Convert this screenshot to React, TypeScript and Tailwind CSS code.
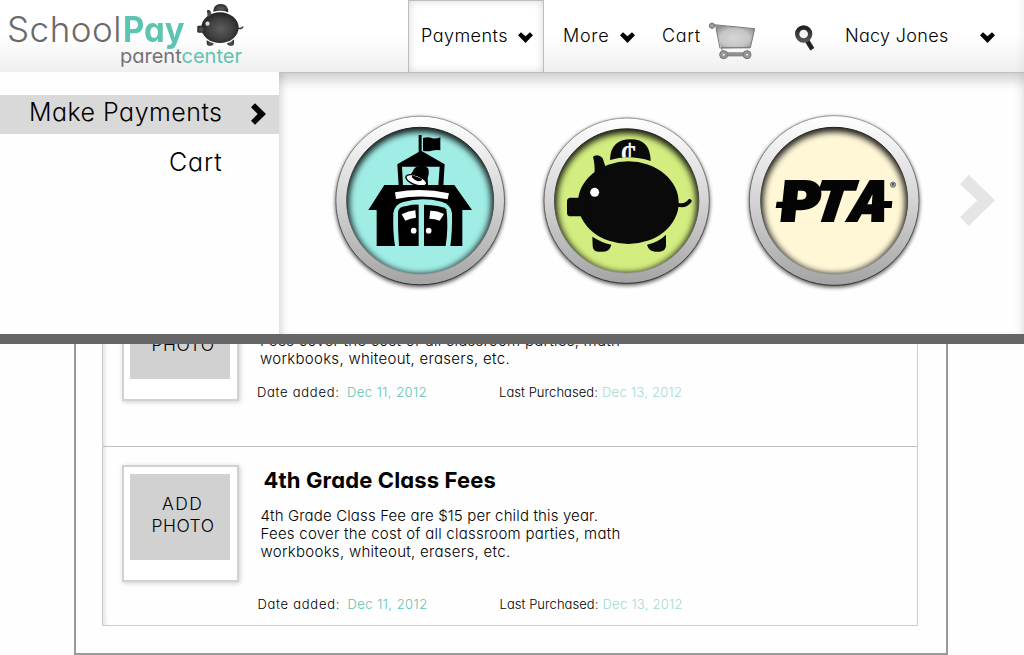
import type { ReactNode } from "react";

function ChevronDown({ className = "" }: { className?: string }) {
  return (
    <svg className={`block h-[11px] w-[15px] shrink-0 ${className}`} viewBox="355 94 45 33">
      <path d="M355 104 364 95 377.500 107 391 95 400 104 377.500 127Z" fill="#000" />
    </svg>
  );
}

function PigShape() {
  return (
    <>
      <path d="M225 165Q226 103 287 103Q346 103 347 168Q312 157 280 157Q250 158 225 165Z" />
      <ellipse cx="280" cy="293" rx="151" ry="124" />
      <path d="M174 155Q190 145 203 160L213 190 178 214Q181 180 174 155Z" />
      <rect x="96" y="278" width="60" height="56" rx="11" />
      <path d="M426 299Q444 304 454 297 462 292 464 288" fill="none" stroke="currentColor" strokeWidth="12" strokeLinecap="round" />
      <path d="M172 395Q198 412 229 419 224 440 205 440H190Q173 438 173 422Z" />
      <path d="M393 389V424Q391 439 375 440H360Q341 438 336 419 370 412 393 389Z" />
    </>
  );
}

function Logo() {
  return (
    <div className="flex w-[408px] shrink-0">
      <div>
        <div className="flex pl-[7px] text-[35px] leading-[58px]">
          <span className="w-[116px] tracking-[0.5px] text-[#6a6a6c]">School</span>
          <span className="origin-left scale-x-[0.94] font-bold text-[#5cc4b0]">Pay</span>
        </div>
        <div className="-mt-[12px] pl-[120px] text-[20px] leading-[20px] font-normal text-[#727274]">
          parent<span className="text-[#5cc4b0]">center</span>
        </div>
      </div>
      <svg className="mt-[3px] -ml-[45px] h-[44px] w-[47px] text-[#333]" viewBox="94 101 380 342">
        <defs>
          <radialGradient id="logoPig" cx="0.52" cy="0.55" r="0.55">
            <stop offset="0" stopColor="#5c5c5c" />
            <stop offset="0.6" stopColor="#404040" />
            <stop offset="1" stopColor="#222" />
          </radialGradient>
        </defs>
        <g fill="url(#logoPig)">
          <PigShape />
        </g>
        <circle cx="179" cy="261" r="17" fill="#ddd" />
      </svg>
    </div>
  );
}

function Badge({ id, cx, cy, r, inner, color, children }: { id: string; cx: number; cy: number; r: number; inner: number; color: string; children: ReactNode }) {
  return (
    <svg className="block h-[190px] w-[190px] shrink-0" viewBox="0 0 570 570">
      <defs>
        <linearGradient id={`${id}Ring`} x1="0" y1="0" x2="0" y2="1">
          <stop offset="0" stopColor="#fff" />
          <stop offset="0.5" stopColor="#d4d4d4" />
          <stop offset="1" stopColor="#a4a4a4" />
        </linearGradient>
        <linearGradient id={`${id}Edge`} x1="0" y1="0" x2="0" y2="1">
          <stop offset="0" stopColor="#999" />
          <stop offset="1" stopColor="#333" />
        </linearGradient>
        <linearGradient id={`${id}Lip`} x1="0" y1="0" x2="0" y2="1">
          <stop offset="0" stopColor="#222" />
          <stop offset="0.6" stopColor="#555" />
          <stop offset="1" stopColor="#999" />
        </linearGradient>
        <filter id={`${id}Blur`} x="-20%" y="-20%" width="140%" height="140%">
          <feGaussianBlur stdDeviation="10" />
        </filter>
        <filter id={`${id}Drop`} x="-20%" y="-20%" width="140%" height="140%">
          <feGaussianBlur stdDeviation="6" />
        </filter>
        <clipPath id={`${id}Clip`}>
          <circle cx={cx} cy={cy} r={inner} />
        </clipPath>
      </defs>
      <circle cx={cx} cy={cy + 4} r={r + 1} fill="#000" opacity="0.7" filter={`url(#${id}Drop)`} />
      <circle cx={cx} cy={cy - 1} r={r} fill={`url(#${id}Ring)`} stroke={`url(#${id}Edge)`} strokeWidth="3" />
      <circle cx={cx} cy={cy} r={inner} fill={color} />
      <g clipPath={`url(#${id}Clip)`}>
        <circle cx={cx} cy={cy + 6} r={inner + 8} fill="none" stroke="#000" strokeOpacity="0.9" strokeWidth="30" filter={`url(#${id}Blur)`} />
      </g>
      <circle cx={cx} cy={cy} r={inner} fill="none" stroke={`url(#${id}Lip)`} strokeWidth="3" />
      {children}
    </svg>
  );
}

function SchoolBadge() {
  return (
    <Badge id="school" cx={285.500} cy={287.500} r={253} inner={220.500} color="#a0ede6">
      <path d="M281 90H290V138L359 178 355 242H340L344 185H231L234 242H221L217 178 281 141Z" />
      <path d="M294 99Q308 95 320 99T346 97V136Q332 134 320 137T294 137Z" />
      <path d="M243 221Q262 206 267 192 274 181 291 183 309 184 311 195 313 206 308 219L309 242H299Z" />
      <ellipse cx="274" cy="226" rx="33" ry="14" transform="rotate(20 274 226)" fill="#fff" stroke="#000" strokeWidth="4" />
      <path d="M262 211 292 221 289 227 279 229 270 225 260 217Z" />
      <path d="M178 240H388L441 315H412V423H155V315H130Z" />
      <path d="M210 262Q290 246 372 265L368 283Q290 267 213 282Z" fill="#fff" />
      <path d="M210 423Q203 380 205 325 206 300 235 291 290 275 350 290 379 299 381 325 382 380 376 423Z" fill="#a0ede6" />
      <path d="M222 423Q218 370 219 320 222 304 245 303 265 298 281 299V423Z" />
      <path d="M297 299Q345 300 364 312 371 365 362 423H297Z" />
      <path d="M230 328Q250 318 271 316L273 338Q257 339 241 347Z" fill="#fff" />
      <path d="M316 317Q338 317 357 327L344 347Q330 341 313 341Z" fill="#fff" />
      <circle cx="266" cy="377" r="8.500" fill="#fff" />
      <circle cx="311" cy="377" r="8.500" fill="#fff" />
    </Badge>
  );
}

function PigBadge() {
  return (
    <Badge id="pig" cx={275} cy={288} r={248} inner={216.500} color="#d3ed80">
      <g className="text-[#0a0a0a]" fill="#0a0a0a">
        <PigShape />
      </g>
      <clipPath id="coinClip">
        <path d="M225 165Q226 103 287 103Q346 103 347 168Q312 157 280 157Q250 158 225 165Z" />
      </clipPath>
      <g clipPath="url(#coinClip)">
        <text x="281" y="179" textAnchor="middle" fontSize="104" fill="#fff" stroke="#fff" strokeWidth="1.500" className="font-['Liberation_Serif',serif] font-normal">
          ¢
        </text>
      </g>
      <circle cx="179" cy="262" r="13.500" fill="#fff" />
    </Badge>
  );
}

function PtaBadge() {
  return (
    <Badge id="pta" cx={282.500} cy={287.500} r={254.500} inner={220.500} color="#fff7d6">
      <g fill="#050505" stroke="#050505" strokeWidth="6" fontWeight="900" fontSize="165" className="font-[Inter,sans-serif]">
        <text transform="translate(116 348) skewX(-6)" textLength="121" lengthAdjust="spacingAndGlyphs">P</text>
        <text transform="translate(205 348) skewX(-18)" textLength="116" lengthAdjust="spacingAndGlyphs">T</text>
        <text transform="translate(315 348) skewX(-17)" textLength="118" lengthAdjust="spacingAndGlyphs">A</text>
      </g>
      <path d="M110 290H135L133 309H107Z" />
      <path d="M420 288H457L455 309H420Z" />
      <circle cx="459" cy="239" r="8" fill="#bbb" stroke="#444" strokeWidth="2" />
      <text x="459" y="244" textAnchor="middle" fontSize="12" fontWeight="700" fill="#333" className="font-[Inter,sans-serif]">R</text>
    </Badge>
  );
}

function CartIcon() {
  return (
    <svg className="ml-[8px] mt-[20px] block h-[42px] w-[49px] shrink-0" viewBox="55 60 147 126">
      <defs>
        <radialGradient id="cartFill" cx="0.5" cy="0.55" r="0.6">
          <stop offset="0" stopColor="#d6d6d6" />
          <stop offset="0.6" stopColor="#c6c6c6" />
          <stop offset="1" stopColor="#8d8d8d" />
        </radialGradient>
      </defs>
      <path d="M74 75 195 87 181 145 94 146 79 84Z" fill="url(#cartFill)" />
      <path d="M72 74 195 86 182 143H94L101 158M91 145 79 84" fill="none" stroke="#777" strokeWidth="3" strokeLinejoin="round" />
      <path d="M101 163H171" stroke="#777" strokeWidth="12" />
      <path d="M103 163H170" stroke="#aaa" strokeWidth="6" />
      <path d="M110 163H162" stroke="#777" strokeWidth="2" />
      <g fill="#999" stroke="#777" strokeWidth="3">
        <circle cx="67" cy="77" r="8" />
        <circle cx="102" cy="164" r="12" />
        <circle cx="172" cy="164" r="12" />
      </g>
      <g fill="#eee" stroke="#777" strokeWidth="2">
        <circle cx="67" cy="77" r="3" />
        <circle cx="102" cy="164" r="4.500" />
        <circle cx="172" cy="164" r="4.500" />
      </g>
    </svg>
  );
}

function SearchIcon() {
  return (
    <svg className="mt-[25px] ml-[37px] block h-[27px] w-[22px] shrink-0" viewBox="312 75 66 81">
      <defs>
        <linearGradient id="lens" x1="0" y1="0" x2="0" y2="1">
          <stop offset="0" stopColor="#222" />
          <stop offset="1" stopColor="#555" />
        </linearGradient>
      </defs>
      <path d="M350 120 367 148" stroke="#222" strokeWidth="14" />
      <circle cx="341" cy="102" r="19.500" fill="#f4f4f4" stroke="url(#lens)" strokeWidth="13" />
    </svg>
  );
}

function Header() {
  return (
    <header className="flex h-[72px] bg-linear-to-b from-white from-50% to-[#efefef] text-[18px] leading-[71px] shadow-[inset_-10px_0_10px_-8px_rgba(0,0,0,0.06)]">
      <Logo />
      <div className="relative z-10 flex h-[73px] w-[136px] shrink-0 items-start border border-[#bdbdbd] bg-white pl-[12px] leading-[69px] shadow-[inset_0_0_8px_rgba(0,0,0,0.16)]">
        <span className="w-[97px] tracking-[0.45px]">Payments</span>
        <ChevronDown className="mt-[31px]" />
      </div>
      <span className="ml-[19px] w-[57px] shrink-0 tracking-[0.7px]">More</span>
      <ChevronDown className="mt-[32px]" />
      <span className="ml-[27px] w-[38px] shrink-0 tracking-[0.7px]">Cart</span>
      <CartIcon />
      <SearchIcon />
      <span className="ml-[29px] w-[135px] shrink-0 tracking-[0.3px]">Nacy Jones</span>
      <ChevronDown className="mt-[32px]" />
    </header>
  );
}

function MegaMenu() {
  return (
    <section className="flex h-[272px] border-b-[10px] border-[#666] bg-[#fefefe]">
      <nav className="w-[279px] shrink-0 pt-[23px] text-[25px]">
        <div className="flex h-[39px] bg-[#d9d9d9]">
          <span className="w-[251px] pl-[29px] leading-[34px] tracking-[0.47px]">Make Payments</span>
          <svg className="mt-[8px] block h-[22px] w-[15px]" viewBox="753 69 45 66">
            <path d="M753 82 765 70 798 102 765 134 753 122 773 102Z" />
          </svg>
        </div>
        <div className="mt-[11px] pl-[169px] leading-[35px] tracking-[0.9px]">Cart</div>
      </nav>
      <div className="flex grow border-t border-[#c0c0c0] bg-[#fefefe] pt-[32px] pl-[46px] shadow-[inset_0_14px_12px_-6px_rgba(0,0,0,0.17),inset_8px_0_8px_-5px_rgba(0,0,0,0.12),inset_-8px_0_8px_-5px_rgba(0,0,0,0.08)]">
        <SchoolBadge />
        <div className="w-5" />
        <PigBadge />
        <div className="w-[15px]" />
        <PtaBadge />
        <svg className="mt-[69px] ml-[29px] block h-[53px] w-[37px]" viewBox="657 207 111 159">
          <path d="M660 238 686 209 765 286 686 363 660 336 712 286Z" fill="#e5e5e5" />
        </svg>
      </div>
    </section>
  );
}

function PhotoFrame({ children }: { children: ReactNode }) {
  return (
    <div className="h-[117px] w-[117px] shrink-0 border-2 border-[#d1d1d1] bg-white px-[6px] pt-[7px] shadow-[1px_1px_5px_rgba(0,0,0,0.2)]">
      <div className="flex h-[86px] w-[100px] flex-col justify-end bg-[#d1d1d1] pb-[24px] pl-[21.5px] text-[17.5px] leading-[21.5px]">
        {children}
      </div>
    </div>
  );
}

function Dates() {
  return (
    <div className="-ml-[3px] flex text-[13px] leading-[18px]">
      <span className="w-[90px] tracking-[0.72px]">Date added:</span>
      <span className="w-[152px] tracking-[0.47px] text-[#5cc4b0]">Dec 11, 2012</span>
      <span className="w-[103px] tracking-[0.05px]">Last Purchased:</span>
      <span className="tracking-[0.27px] text-[#9edccf]">Dec 13, 2012</span>
    </div>
  );
}

function Listing() {
  return (
    <main className="h-[311px] pr-[76px] pl-[74px]">
      <div className="h-full border-2 border-t-0 border-[#999] pr-[28px] pl-[26px]">
        <div className="h-[282px] border border-t-0 border-[#cdcdcd] shadow-[inset_5px_0_4px_-3px_rgba(0,0,0,0.12)]">
          <article className="flex h-[103px] overflow-hidden border-b border-[#bfbfbf] pl-[19px]">
            <div className="-mt-[60px]">
              <PhotoFrame>
                <span className="tracking-[0.5px]">PHOTO</span>
              </PhotoFrame>
            </div>
            <div className="-mt-[12px] pl-[21px]">
              <p className="text-[15px] leading-[18px]">
                <span className="block tracking-[0.24px]">Fees cover the cost of all classroom parties, math</span>
                <span className="block tracking-[0.29px]">workbooks, whiteout, erasers, etc.</span>
              </p>
              <div className="pt-[15px]">
                <Dates />
              </div>
            </div>
          </article>
          <article className="flex h-[178px] pt-[18px] pl-[19px]">
            <PhotoFrame>
              <span className="pl-[10.5px] tracking-[1.4px]">ADD</span>
              <span className="tracking-[0.5px]">PHOTO</span>
            </PhotoFrame>
            <div className="pl-[21.5px]">
              <h2 className="pl-[3px] text-[22px] leading-[30px] font-bold tracking-[0.14px]">4th Grade Class Fees</h2>
              <p className="pt-[12px] text-[15px] leading-[18px]">
                <span className="block tracking-[0.14px]">4th Grade Class Fee are $15 per child this year.</span>
                <span className="block tracking-[0.24px]">Fees cover the cost of all classroom parties, math</span>
                <span className="block tracking-[0.29px]">workbooks, whiteout, erasers, etc.</span>
              </p>
              <div className="pt-[34px]">
                <Dates />
              </div>
            </div>
          </article>
        </div>
      </div>
    </main>
  );
}

export default function App() {
  return (
    <div className="h-[655px] w-[1024px] overflow-hidden bg-[#fefefe] font-[Inter,'Open_Sans',sans-serif] font-light text-black [font-feature-settings:'cv11'_1]">
      <Header />
      <MegaMenu />
      <Listing />
    </div>
  );
}
